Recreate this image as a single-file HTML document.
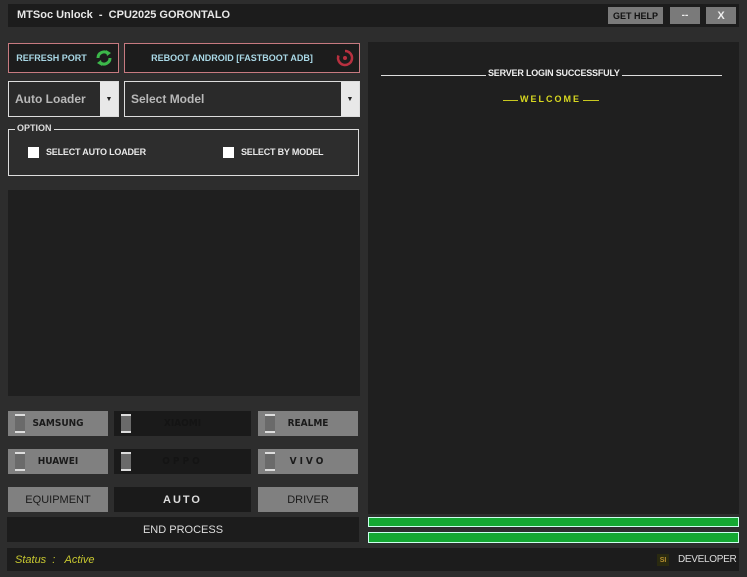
<!DOCTYPE html><html><head><style>
*{margin:0;padding:0;box-sizing:border-box}
body{width:747px;height:577px;background:#2d2d2d;font-family:"Liberation Sans",sans-serif;position:relative;overflow:hidden}
.a{position:absolute}
.t{display:flex;align-items:center;justify-content:center}
.btn{background:#1c1c1c;border:1px solid #c77a80;color:#a9d8e6;font-size:9px;font-weight:bold}
.lt{background:#808080;color:#1a1a1a;font-size:11px;font-weight:bold}
.dk{background:#1a1a1a;color:#141414;font-size:11px;font-weight:bold}
.sw{position:absolute;left:7px;top:3px;width:10px;height:19px;background:#6a6a6a;border-top:2px solid #ddd;border-bottom:2px solid #ddd}
.brand{font-family:"DejaVu Sans Condensed","Liberation Sans Narrow","Liberation Sans",sans-serif;font-size:10px;transform-origin:center}
</style></head><body>
<div class="a" style="left:8px;top:4px;width:731px;height:23px;background:#1c1c1c"></div>
<div class="a" style="left:17px;top:9px;color:#e8e8e8;font-size:11px;font-weight:bold">MTSoc Unlock &nbsp;- &nbsp;CPU2025 GORONTALO</div>
<div class="a t" style="left:608px;top:7px;width:55px;height:17px;background:#7a7a7a;color:#111;font-size:9px;font-weight:bold">GET HELP</div>
<div class="a t" style="left:670px;top:7px;width:30px;height:17px;background:#7a7a7a;color:#eee;font-size:10px;font-weight:bold">--</div>
<div class="a t" style="left:706px;top:7px;width:30px;height:17px;background:#7a7a7a;color:#eee;font-size:11px;font-weight:bold">X</div>

<div class="a t btn" style="left:8px;top:43px;width:111px;height:30px;padding-right:24px">REFRESH PORT</div>
<svg class="a" style="left:94px;top:48px" width="20" height="20" viewBox="0 0 20 20"><path d="M4 10a6 6 0 0 1 10-4.5" stroke="#3cb84a" stroke-width="3" fill="none"/><path d="M16 10a6 6 0 0 1-10 4.5" stroke="#3cb84a" stroke-width="3" fill="none"/><path d="M12 2l5 3-4 3z M8 18l-5-3 4-3z" fill="#3cb84a"/></svg>
<div class="a t btn" style="left:124px;top:43px;width:236px;height:30px;padding-right:20px">REBOOT ANDROID [FASTBOOT ADB]</div>
<svg class="a" style="left:335px;top:48px" width="20" height="20" viewBox="0 0 20 20"><path d="M10 3a7 7 0 1 1-6.5 4.5" stroke="#b8303f" stroke-width="2.5" fill="none"/><circle cx="10" cy="10" r="2" fill="#b8303f"/></svg>

<div class="a" style="left:8px;top:81px;width:111px;height:36px;background:#2a2a2a;border:1px solid #ddd"></div>
<div class="a" style="left:15px;top:92px;color:#b8b8b8;font-size:12px;font-weight:bold">Auto Loader</div>
<div class="a t" style="left:100px;top:82px;width:18px;height:34px;background:#e8e8e8;font-size:7px;color:#222">▼</div>
<div class="a" style="left:124px;top:81px;width:236px;height:36px;background:#2a2a2a;border:1px solid #ddd"></div>
<div class="a" style="left:131px;top:92px;color:#b8b8b8;font-size:12px;font-weight:bold">Select Model</div>
<div class="a t" style="left:341px;top:82px;width:18px;height:34px;background:#e8e8e8;font-size:7px;color:#222">▼</div>

<div class="a" style="left:8px;top:129px;width:351px;height:47px;border:1px solid #ddd"></div>
<div class="a" style="left:15px;top:123px;background:#2d2d2d;padding:0 2px;color:#ddd;font-size:9px;font-weight:bold">OPTION</div>
<div class="a" style="left:28px;top:147px;width:11px;height:11px;background:#fff"></div>
<div class="a" style="left:46px;top:147px;color:#e8e8e8;font-size:9px;font-weight:bold;letter-spacing:-0.2px">SELECT AUTO LOADER</div>
<div class="a" style="left:223px;top:147px;width:11px;height:11px;background:#fff"></div>
<div class="a" style="left:241px;top:147px;color:#e8e8e8;font-size:9px;font-weight:bold;letter-spacing:-0.2px">SELECT BY MODEL</div>

<div class="a" style="left:8px;top:190px;width:352px;height:206px;background:#1f1f1f"></div>
<div class="a" style="left:368px;top:42px;width:371px;height:472px;background:#1f1f1f"></div>
<div class="a" style="left:381px;top:74.5px;width:341px;height:1px;background:#ddd"></div>
<div class="a" style="left:486px;top:68px;background:#1f1f1f;padding:0 2px;color:#eee;font-size:9px;font-weight:bold;letter-spacing:-0.2px">SERVER LOGIN SUCCESSFULY</div>
<div class="a" style="left:503px;top:100px;width:96px;height:1px;background:#c8c820"></div>
<div class="a" style="left:518px;top:94px;background:#1f1f1f;padding:0 2px;color:#d8d820;font-size:9px;font-weight:bold;letter-spacing:2px">WELCOME</div>

<div class="a t lt brand" style="left:8px;top:411px;width:100px;height:25px"><div class="sw"></div>SAMSUNG</div>
<div class="a t dk brand" style="left:114px;top:411px;width:137px;height:25px"><div class="sw"></div>XIAOMI</div>
<div class="a t lt brand" style="left:258px;top:411px;width:100px;height:25px"><div class="sw"></div>REALME</div>
<div class="a t lt brand" style="left:8px;top:449px;width:100px;height:25px"><div class="sw"></div>HUAWEI</div>
<div class="a t dk brand" style="left:114px;top:449px;width:137px;height:25px;letter-spacing:3px"><div class="sw"></div>OPPO</div>
<div class="a t lt brand" style="left:258px;top:449px;width:100px;height:25px;letter-spacing:3px"><div class="sw"></div>VIVO</div>
<div class="a t lt" style="left:8px;top:487px;width:100px;height:25px;font-weight:normal;font-size:11px">EQUIPMENT</div>
<div class="a t dk" style="left:114px;top:487px;width:137px;height:25px;color:#ddd;letter-spacing:2px">AUTO</div>
<div class="a t lt" style="left:258px;top:487px;width:100px;height:25px;font-weight:normal;font-size:11px">DRIVER</div>
<div class="a t" style="left:7px;top:517px;width:352px;height:25px;background:#1c1c1c;color:#ddd;font-size:11px">END PROCESS</div>
<div class="a" style="left:368px;top:517px;width:371px;height:10px;background:#14a832;border:1px solid #cfe"></div>
<div class="a" style="left:368px;top:532px;width:371px;height:11px;background:#14a832;border:1px solid #cfe"></div>
<div class="a" style="left:7px;top:548px;width:732px;height:23px;background:#1c1c1c"></div>
<div class="a" style="left:15px;top:554px;color:#c8c830;font-size:11px;font-style:italic">Status &nbsp;: &nbsp;&nbsp;Active</div>
<div class="a t" style="left:657px;top:554px;width:12px;height:12px;background:#2a2a10;color:#b89030;font-size:7px;font-weight:bold">SI</div>
<div class="a" style="left:678px;top:554px;color:#ddd;font-size:10px;letter-spacing:-0.3px">DEVELOPER</div>
</body></html>
